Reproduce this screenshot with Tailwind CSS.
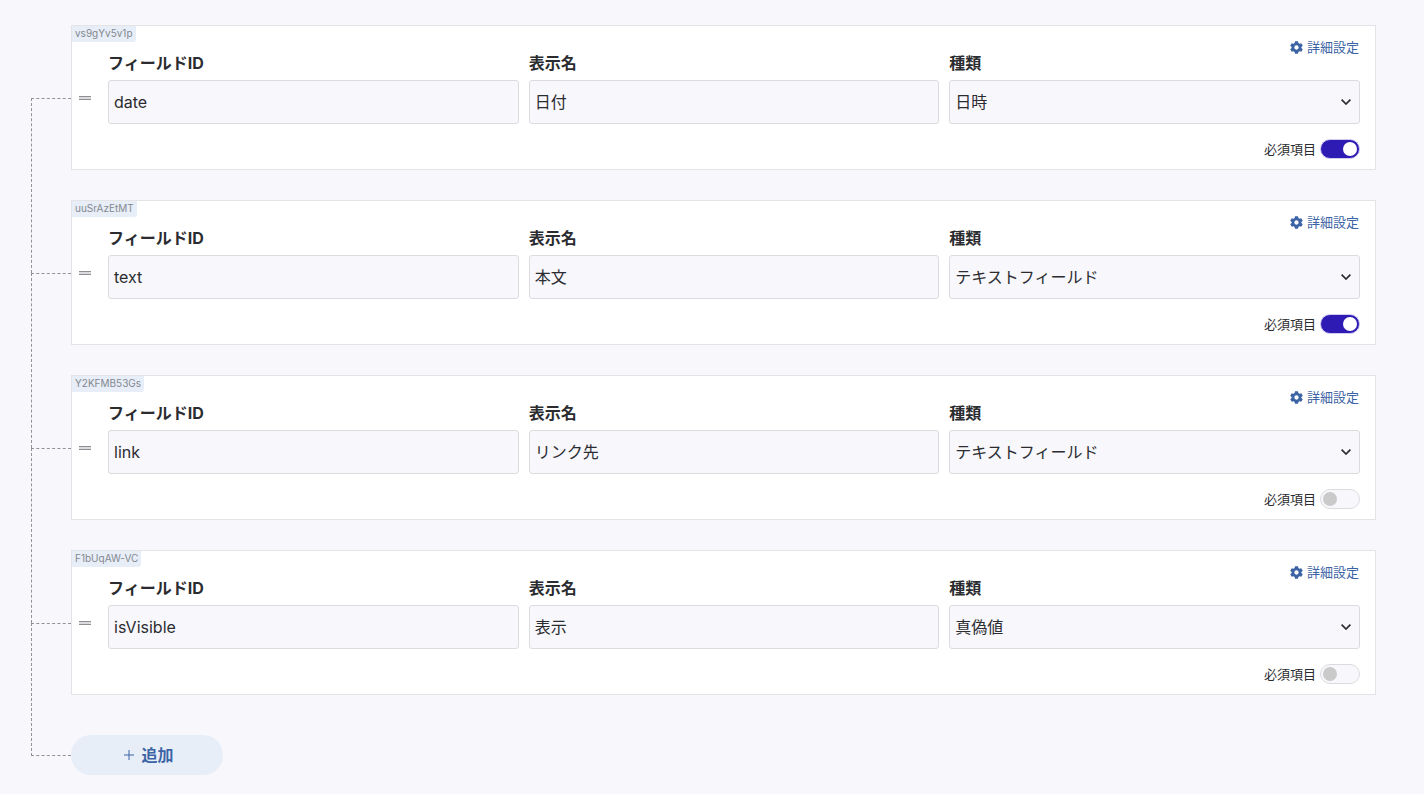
<!DOCTYPE html>
<html lang="ja">
<head>
<meta charset="utf-8">
<meta name="viewport" content="width=device-width, initial-scale=1">
<title>フィールド設定</title>
<script src="https://cdn.jsdelivr.net/npm/@tailwindcss/browser@4"></script>
</head>
<body class="min-h-screen bg-[#f7f7fc] font-['Inter','Noto_Sans_CJK_JP',sans-serif] text-base text-[#2b2c30]">
<svg class="hidden" aria-hidden="true">
  <symbol id="gear" viewBox="0 0 24 24"><path fill-rule="evenodd" d="M9.2 0.5h5.6l.7 3.4 2 1.150 3.300-1.100 2.800 4.850-2.600 2.300v1.800l2.600 2.300-2.800 4.850-3.300-1.100-2 1.150-.7 3.400H9.200l-.7-3.400-2-1.150-3.300 1.100L.4 15.200 3 12.900v-1.800L.4 8.800 3.200 3.950l3.300 1.100 2-1.150zM12 8a4 4 0 1 0 0 8 4 4 0 0 0 0-8z" fill="currentColor"/></symbol>
  <symbol id="chevron" viewBox="0 0 10 6"><path d="M.6 .6 5 5 9.400 .6" fill="none" stroke="currentColor" stroke-width="1.700"/></symbol>
  <symbol id="grip" viewBox="0 0 12 4"><path d="M0 0h12v4H0z" fill="#dcdcde"/><path d="M0 .5h12M0 3.500h12" stroke="#8e8e93" stroke-width="1"/></symbol>
</svg>
<main class="pt-[25px] pr-12 pb-4 pl-[71px]">
  <ul class="flex flex-col gap-[30px]">
    <li class="relative">
      <span class="absolute top-[73px] -left-10 h-[175px] w-10 border-t border-l border-dashed border-[#929297]"></span>
      <section class="relative flex border border-[#e4e4e6] bg-white">
        <span class="absolute top-0 left-0 rounded-br-[3px] bg-[#e7eef8] px-[3px] pb-[2px] text-[10px] leading-[14px] text-[#85888f]">vs9gYv5v1p</span>
        <button type="button" aria-label="並べ替え" class="flex w-9 shrink-0 items-center pl-[7px]"><svg class="h-1 w-3"><use href="#grip"/></svg></button>
        <div class="min-w-0 flex-1 pt-[13px] pr-[15px] pb-[10px]">
          <div class="flex justify-end"><button type="button" class="flex items-center gap-1 px-px text-[13px] leading-4 text-[#3c64a4]"><svg class="mt-px size-[13px]"><use href="#gear"/></svg>詳細設定</button></div>
          <div class="grid grid-cols-3 gap-[10px]">
            <div class="flex flex-col gap-[9px]"><label for="id1" class="leading-4 font-bold">フィールドID</label><input id="id1" value="date" class="h-11 w-full rounded-[3px] border border-[#dcdcde] bg-[#f7f7fc] px-[5px]"></div>
            <div class="flex flex-col gap-[9px]"><label for="name1" class="leading-4 font-bold">表示名</label><input id="name1" value="日付" class="h-11 w-full rounded-[3px] border border-[#dcdcde] bg-[#f7f7fc] px-[5px] pb-[2px]"></div>
            <div class="flex flex-col gap-[9px]"><label for="type1" class="leading-4 font-bold">種類</label><div class="relative"><select id="type1" class="block h-11 w-full appearance-none rounded-[3px] border border-[#dcdcde] bg-[#f7f7fc] px-[5px]"><option>日時</option></select><svg class="pointer-events-none absolute top-[19px] right-[9px] h-1.5 w-2.5"><use href="#chevron"/></svg></div></div>
          </div>
          <label class="mt-[15px] ml-auto flex w-fit items-center gap-1 text-[13px] leading-5">必須項目<input type="checkbox" checked class="flex h-5 w-10 appearance-none items-center rounded-full border border-[#dcdcde] bg-[#f7f7fc] px-[2px] before:size-[14px] before:rounded-full before:bg-[#cacaca] checked:justify-end checked:border-[#d2cdf0] checked:bg-[#2d1bb3] checked:before:bg-white"></label>
        </div>
      </section>
    </li>
    <li class="relative">
      <span class="absolute top-[73px] -left-10 h-[175px] w-10 border-t border-l border-dashed border-[#929297]"></span>
      <section class="relative flex border border-[#e4e4e6] bg-white">
        <span class="absolute top-0 left-0 rounded-br-[3px] bg-[#e7eef8] px-[3px] pb-[2px] text-[10px] leading-[14px] text-[#85888f]">uuSrAzEtMT</span>
        <button type="button" aria-label="並べ替え" class="flex w-9 shrink-0 items-center pl-[7px]"><svg class="h-1 w-3"><use href="#grip"/></svg></button>
        <div class="min-w-0 flex-1 pt-[13px] pr-[15px] pb-[10px]">
          <div class="flex justify-end"><button type="button" class="flex items-center gap-1 px-px text-[13px] leading-4 text-[#3c64a4]"><svg class="mt-px size-[13px]"><use href="#gear"/></svg>詳細設定</button></div>
          <div class="grid grid-cols-3 gap-[10px]">
            <div class="flex flex-col gap-[9px]"><label for="id2" class="leading-4 font-bold">フィールドID</label><input id="id2" value="text" class="h-11 w-full rounded-[3px] border border-[#dcdcde] bg-[#f7f7fc] px-[5px]"></div>
            <div class="flex flex-col gap-[9px]"><label for="name2" class="leading-4 font-bold">表示名</label><input id="name2" value="本文" class="h-11 w-full rounded-[3px] border border-[#dcdcde] bg-[#f7f7fc] px-[5px] pb-[2px]"></div>
            <div class="flex flex-col gap-[9px]"><label for="type2" class="leading-4 font-bold">種類</label><div class="relative"><select id="type2" class="block h-11 w-full appearance-none rounded-[3px] border border-[#dcdcde] bg-[#f7f7fc] px-[5px]"><option>テキストフィールド</option></select><svg class="pointer-events-none absolute top-[19px] right-[9px] h-1.5 w-2.5"><use href="#chevron"/></svg></div></div>
          </div>
          <label class="mt-[15px] ml-auto flex w-fit items-center gap-1 text-[13px] leading-5">必須項目<input type="checkbox" checked class="flex h-5 w-10 appearance-none items-center rounded-full border border-[#dcdcde] bg-[#f7f7fc] px-[2px] before:size-[14px] before:rounded-full before:bg-[#cacaca] checked:justify-end checked:border-[#d2cdf0] checked:bg-[#2d1bb3] checked:before:bg-white"></label>
        </div>
      </section>
    </li>
    <li class="relative">
      <span class="absolute top-[73px] -left-10 h-[175px] w-10 border-t border-l border-dashed border-[#929297]"></span>
      <section class="relative flex border border-[#e4e4e6] bg-white">
        <span class="absolute top-0 left-0 rounded-br-[3px] bg-[#e7eef8] px-[3px] pb-[2px] text-[10px] leading-[14px] text-[#85888f]">Y2KFMB53Gs</span>
        <button type="button" aria-label="並べ替え" class="flex w-9 shrink-0 items-center pl-[7px]"><svg class="h-1 w-3"><use href="#grip"/></svg></button>
        <div class="min-w-0 flex-1 pt-[13px] pr-[15px] pb-[10px]">
          <div class="flex justify-end"><button type="button" class="flex items-center gap-1 px-px text-[13px] leading-4 text-[#3c64a4]"><svg class="mt-px size-[13px]"><use href="#gear"/></svg>詳細設定</button></div>
          <div class="grid grid-cols-3 gap-[10px]">
            <div class="flex flex-col gap-[9px]"><label for="id3" class="leading-4 font-bold">フィールドID</label><input id="id3" value="link" class="h-11 w-full rounded-[3px] border border-[#dcdcde] bg-[#f7f7fc] px-[5px]"></div>
            <div class="flex flex-col gap-[9px]"><label for="name3" class="leading-4 font-bold">表示名</label><input id="name3" value="リンク先" class="h-11 w-full rounded-[3px] border border-[#dcdcde] bg-[#f7f7fc] px-[5px] pb-[2px]"></div>
            <div class="flex flex-col gap-[9px]"><label for="type3" class="leading-4 font-bold">種類</label><div class="relative"><select id="type3" class="block h-11 w-full appearance-none rounded-[3px] border border-[#dcdcde] bg-[#f7f7fc] px-[5px]"><option>テキストフィールド</option></select><svg class="pointer-events-none absolute top-[19px] right-[9px] h-1.5 w-2.5"><use href="#chevron"/></svg></div></div>
          </div>
          <label class="mt-[15px] ml-auto flex w-fit items-center gap-1 text-[13px] leading-5">必須項目<input type="checkbox" class="flex h-5 w-10 appearance-none items-center rounded-full border border-[#dcdcde] bg-[#f7f7fc] px-[2px] before:size-[14px] before:rounded-full before:bg-[#cacaca] checked:justify-end checked:border-[#d2cdf0] checked:bg-[#2d1bb3] checked:before:bg-white"></label>
        </div>
      </section>
    </li>
    <li class="relative">
      <span class="absolute top-[73px] -left-10 h-[133px] w-10 border-y border-l border-dashed border-[#929297]"></span>
      <section class="relative flex border border-[#e4e4e6] bg-white">
        <span class="absolute top-0 left-0 rounded-br-[3px] bg-[#e7eef8] px-[3px] pb-[2px] text-[10px] leading-[14px] text-[#85888f]">F1bUqAW-VC</span>
        <button type="button" aria-label="並べ替え" class="flex w-9 shrink-0 items-center pl-[7px]"><svg class="h-1 w-3"><use href="#grip"/></svg></button>
        <div class="min-w-0 flex-1 pt-[13px] pr-[15px] pb-[10px]">
          <div class="flex justify-end"><button type="button" class="flex items-center gap-1 px-px text-[13px] leading-4 text-[#3c64a4]"><svg class="mt-px size-[13px]"><use href="#gear"/></svg>詳細設定</button></div>
          <div class="grid grid-cols-3 gap-[10px]">
            <div class="flex flex-col gap-[9px]"><label for="id4" class="leading-4 font-bold">フィールドID</label><input id="id4" value="isVisible" class="h-11 w-full rounded-[3px] border border-[#dcdcde] bg-[#f7f7fc] px-[5px]"></div>
            <div class="flex flex-col gap-[9px]"><label for="name4" class="leading-4 font-bold">表示名</label><input id="name4" value="表示" class="h-11 w-full rounded-[3px] border border-[#dcdcde] bg-[#f7f7fc] px-[5px] pb-[2px]"></div>
            <div class="flex flex-col gap-[9px]"><label for="type4" class="leading-4 font-bold">種類</label><div class="relative"><select id="type4" class="block h-11 w-full appearance-none rounded-[3px] border border-[#dcdcde] bg-[#f7f7fc] px-[5px]"><option>真偽値</option></select><svg class="pointer-events-none absolute top-[19px] right-[9px] h-1.5 w-2.5"><use href="#chevron"/></svg></div></div>
          </div>
          <label class="mt-[15px] ml-auto flex w-fit items-center gap-1 text-[13px] leading-5">必須項目<input type="checkbox" class="flex h-5 w-10 appearance-none items-center rounded-full border border-[#dcdcde] bg-[#f7f7fc] px-[2px] before:size-[14px] before:rounded-full before:bg-[#cacaca] checked:justify-end checked:border-[#d2cdf0] checked:bg-[#2d1bb3] checked:before:bg-white"></label>
        </div>
      </section>
    </li>
  </ul>
  <button type="button" class="mt-10 flex h-10 w-[152px] items-center justify-center gap-[7px] rounded-full bg-[#e7eef8] pl-1 font-bold text-[#3c64a4]"><svg class="size-[10px]" viewBox="0 0 10 10"><path d="M5 0v10M0 5h10" stroke="currentColor" stroke-width="1"/></svg>追加</button>
</main>
</body>
</html>
